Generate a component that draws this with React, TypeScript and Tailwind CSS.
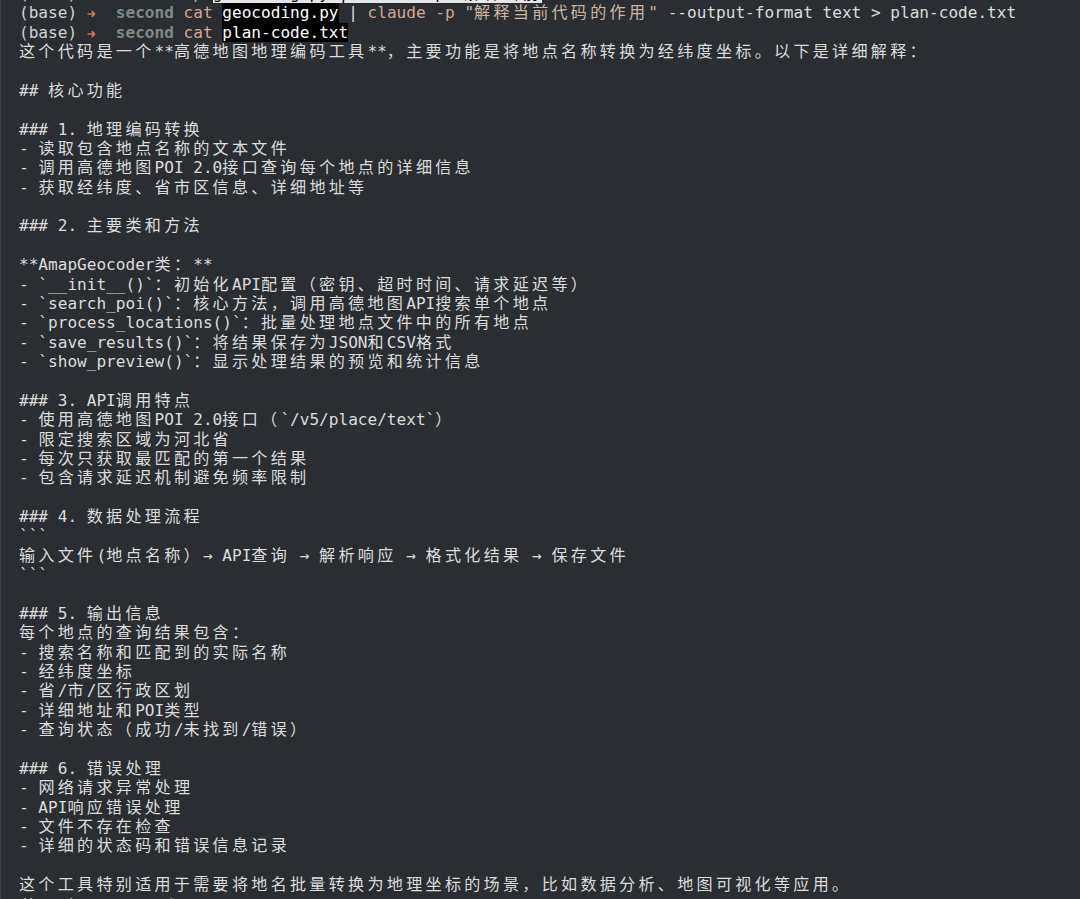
import { Fragment, type ReactNode } from "react";

// terminal cell: 1 col = 9.68px, CJK takes 2 cols
const WIDE =
  /[\u1100-\u115f\u2e80-\u303f\u3040-\ua4cf\uac00-\ud7a3\uf900-\ufaff\ufe30-\ufe4f\uff00-\uff60\uffe0-\uffe6]/;

function Cells({ text }: { text: string }) {
  const runs: { wide: boolean; s: string }[] = [];
  for (const ch of text) {
    const wide = WIDE.test(ch);
    const last = runs[runs.length - 1];
    if (last && last.wide === wide) last.s += ch;
    else runs.push({ wide, s: ch });
  }
  return (
    <>
      {runs.map((r, i) =>
        r.wide ? (
          <span
            key={i}
            className="font-['Noto_Sans_CJK_SC',sans-serif] leading-4 tracking-[3.28px]"
          >
            {r.s}
          </span>
        ) : (
          <Fragment key={i}>{r.s}</Fragment>
        ),
      )}
    </>
  );
}

function Line({ children }: { children?: ReactNode }) {
  return <div className="h-[19.38px] whitespace-pre">{children}</div>;
}

function Arrow() {
  return (
    <svg
      width="9.68"
      height="10"
      viewBox="0 0 10 10"
      className="inline-block align-[-1px]"
    >
      <path
        d="M1.2 5h6.6M5.4 2.6 7.9 5 5.4 7.4"
        stroke="#e2735f"
        strokeWidth="1.7"
        fill="none"
        strokeLinecap="round"
        strokeLinejoin="round"
      />
    </svg>
  );
}

function Prompt() {
  return (
    <>
      <span className="text-[#d2d2d2]">(base) </span>
      <Arrow />
      {"  "}
      <span className="font-bold text-[#7d8a86]">second</span>{" "}
    </>
  );
}

const body = [
  "这个代码是一个**高德地图地理编码工具**，主要功能是将地点名称转换为经纬度坐标。以下是详细解释：",
  "",
  "## 核心功能",
  "",
  "### 1. 地理编码转换",
  "- 读取包含地点名称的文本文件",
  "- 调用高德地图POI 2.0接口查询每个地点的详细信息",
  "- 获取经纬度、省市区信息、详细地址等",
  "",
  "### 2. 主要类和方法",
  "",
  "**AmapGeocoder类：**",
  "- `__init__()`：初始化API配置（密钥、超时时间、请求延迟等）",
  "- `search_poi()`：核心方法，调用高德地图API搜索单个地点",
  "- `process_locations()`：批量处理地点文件中的所有地点",
  "- `save_results()`：将结果保存为JSON和CSV格式",
  "- `show_preview()`：显示处理结果的预览和统计信息",
  "",
  "### 3. API调用特点",
  "- 使用高德地图POI 2.0接口（`/v5/place/text`）",
  "- 限定搜索区域为河北省",
  "- 每次只获取最匹配的第一个结果",
  "- 包含请求延迟机制避免频率限制",
  "",
  "### 4. 数据处理流程",
  "```",
  "输入文件(地点名称）→ API查询 → 解析响应 → 格式化结果 → 保存文件",
  "```",
  "",
  "### 5. 输出信息",
  "每个地点的查询结果包含：",
  "- 搜索名称和匹配到的实际名称",
  "- 经纬度坐标",
  "- 省/市/区行政区划",
  "- 详细地址和POI类型",
  "- 查询状态（成功/未找到/错误）",
  "",
  "### 6. 错误处理",
  "- 网络请求异常处理",
  "- API响应错误处理",
  "- 文件不存在检查",
  "- 详细的状态码和错误信息记录",
  "",
  "这个工具特别适用于需要将地名批量转换为地理坐标的场景，比如数据分析、地图可视化等应用。",
];

export default function App() {
  return (
    <div className="h-[899px] w-[1080px] overflow-hidden border-l border-[#3e4247] bg-[#2a2e32] pl-[18px] font-['DejaVu_Sans_Mono','Noto_Sans_CJK_SC',monospace] text-[16.08px] leading-[19.38px] text-[#dcdcdc] [text-spacing-trim:space-all]">
      <div className="-mt-[16.08px]">
        {/* previous command, mostly scrolled off */}
        <Line>
          <Prompt />
          <span className="text-[#d5a592]">cp</span>{" "}
          <span className="inline-block h-[19.38px] bg-[#e6e6e6] align-top text-black">
            <Cells text={'geocoding.py | claude -p "解释当前'} />
          </span>
        </Line>
        <Line>
          <Prompt />
          <span className="text-[#d5a592]">cat</span>{" "}
          <span className="inline-block h-[19.38px] bg-black align-top text-white">
            geocoding.py
          </span>{" "}
          | <span className="text-[#d5a592]">claude -p </span>
          <span className="text-[#cdb6a4]">
            <Cells text={'"解释当前代码的作用"'} />
          </span>{" "}
          --output-format text &gt; plan-code.txt
        </Line>
        <Line>
          <Prompt />
          <span className="text-[#d5a592]">cat</span>{" "}
          <span className="inline-block h-[19.38px] bg-black align-top text-white">
            plan-code.txt
          </span>
        </Line>
        {body.map((l, i) => (
          <Line key={i}>
            <Cells text={l} />
          </Line>
        ))}
        <Line>
          <Prompt />
        </Line>
      </div>
    </div>
  );
}
